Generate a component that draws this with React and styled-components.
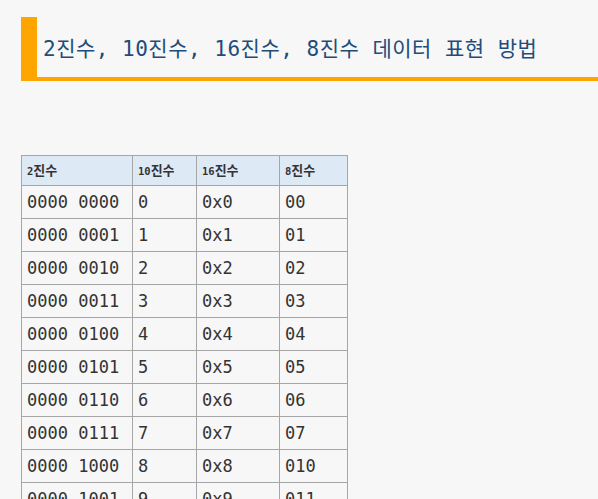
import React from "react";
import styled, { createGlobalStyle } from "styled-components";

const GlobalStyle = createGlobalStyle`
  html, body {
    margin: 0;
    background: #f7f7f7;
  }
`;

// 0 ~ 16 까지의 진수 표현
const rows = Array.from({ length: 17 }, (_, n) => {
  const bin = n.toString(2).padStart(8, "0");
  return {
    bin: bin.slice(0, 4) + " " + bin.slice(4),
    dec: String(n),
    hex: "0x" + n.toString(16),
    oct: "0" + n.toString(8),
  };
});

function App() {
  return (
    <Page>
      <GlobalStyle />
      <Heading>2진수, 10진수, 16진수, 8진수 데이터 표현 방법</Heading>
      <Table>
        <colgroup>
          <col style={{ width: 111 }} />
          <col style={{ width: 64 }} />
          <col style={{ width: 83 }} />
          <col style={{ width: 68 }} />
        </colgroup>
        <thead>
          <tr>
            <Th><Num>2</Num>진수</Th>
            <Th><Num>10</Num>진수</Th>
            <Th><Num>16</Num>진수</Th>
            <Th><Num>8</Num>진수</Th>
          </tr>
        </thead>
        <tbody>
          {rows.map((r) => (
            <tr key={r.dec}>
              <Td>{r.bin}</Td>
              <Td>{r.dec}</Td>
              <Td>{r.hex}</Td>
              <Td>{r.oct}</Td>
            </tr>
          ))}
        </tbody>
      </Table>
    </Page>
  );
}

const Page = styled.div`
  padding: 17px 0 40px 21px;
  font-family: "DejaVu Sans Mono", "Noto Sans CJK KR", monospace;
`;

const Heading = styled.h2`
  margin: 0 0 74px 0;
  padding: 17px 0 13px 6px;
  border-left: 16px solid #ffa500;
  border-bottom: 4px solid #ffa500;
  font-family: "DejaVu Sans Mono", "Noto Sans CJK KR", monospace;
  font-size: 21px;
  letter-spacing: 0.5px;
  line-height: 30px;
  font-weight: normal;
  color: #1f4d7a;
  white-space: nowrap;
`;

const Table = styled.table`
  border-collapse: collapse;
  table-layout: fixed;
  width: 326px;
`;

const Th = styled.th`
  background: #dde9f5;
  border: 1px solid #a6a6a6;
  padding: 5px 5px;
  height: 17px;
  text-align: left;
  font-family: "Noto Sans CJK KR", sans-serif;
  font-size: 13px;
  font-weight: bold;
  line-height: 17px;
  color: #333;
`;

const Num = styled.span`
  font-family: "DejaVu Sans Mono", monospace;
  font-size: 10.5px;
`;

const Td = styled.td`
  border: 1px solid #a6a6a6;
  padding: 6px 5px;
  font-size: 17px;
  line-height: 20px;
  color: #333;
  white-space: nowrap;
  overflow: hidden;
`;

export default App;
